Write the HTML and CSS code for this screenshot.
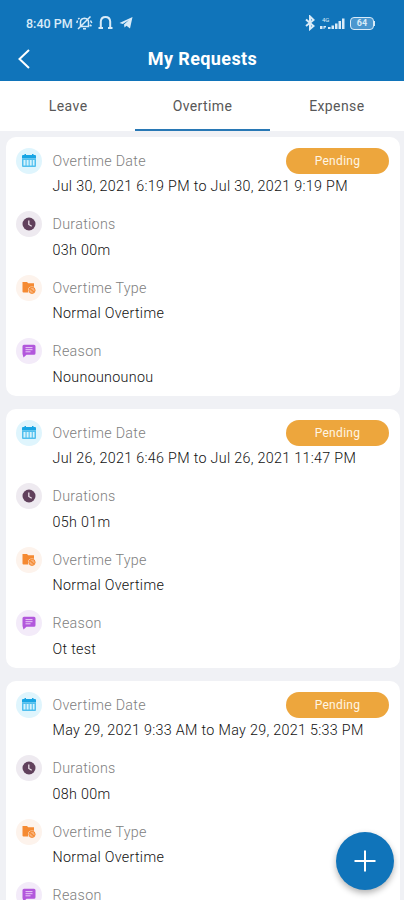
FILE: index.html
```
<!DOCTYPE html>
<html lang="en">
<head>
    <meta charset="UTF-8">
    <meta name="viewport" content="width=device-width, initial-scale=1.0">
    <title>My Requests</title>
    <link rel="stylesheet" href="styles.css">
    <script src="main.js" defer></script>
</head>
<body>
<!-- icons -->
<svg class="sprite">
    <symbol id="date" viewBox="0 0 14 14">
        <path fill="#17a5e4" d="M1 1h1.500V0h1.500v1h6V0h1.500v1H13q1 0 1 1v2.500H0V2q0-1 1-1z"/>
        <path fill="#50bfee" d="M0 4.500h14V12q0 1-1 1H1q-1 0-1-1z"/>
        <path fill="#d5f3fd" d="M1.500 6h2v5.500h-2zM4.600 6h2v5.500h-2zM7.700 6h2v5.500h-2zM10.800 6h1.700v5.500h-1.700z"/>
    </symbol>
    <symbol id="time" viewBox="0 0 14 14">
        <circle cx="7" cy="7" r="6.500" fill="#61415c"/>
        <path fill="none" stroke="#eadfe8" stroke-width="1.300" d="M6.800 3.500v4l2.900 1.700"/>
    </symbol>
    <symbol id="type" viewBox="0 0 14 14">
        <path fill="#f58a32" d="M.5 1h4.500l1.200 1.200H12v4H9L6.500 8.500v3H1.500q-1 0-1-1z"/>
        <circle cx="10" cy="9.300" r="3.900" fill="#fdeee2"/>
        <circle cx="10" cy="9.300" r="3.100" fill="#f9b27a" stroke="#f58a32"/>
        <path fill="none" stroke="#f58a32" stroke-width="1.200" d="M8 7.500l4 3.600"/>
    </symbol>
    <symbol id="reason" viewBox="0 0 14 14">
        <path fill="#b257dc" d="M2 .8h10q1.500 0 1.500 1.500v7q0 1.500-1.500 1.500H4.500L1.500 13.600 .5 10V2.300Q.5.8 2 .8z"/>
        <path stroke="#ebcdf7" d="M3.500 3.600h7M3.500 5.700h7M3.500 7.800h5"/>
    </symbol>
</svg>

<div class="header">
    <div class="status">
        <span class="clock">8:40 PM</span>
        <svg class="mute" width="17" height="16" viewBox="0 0 17 16">
            <path d="M4.500 11.500V7q0-3.500 4-3.800 4 .3 4 3.800v4.500zM7 13.800h3M2 14L14.500 1.500M1.500 5.500L.8 8M3.500 3L2.200 4.300M14.500 5.500l1.300 2.500M13.800 10l1.700 1"/>
        </svg>
        <svg class="bell" width="15" height="16" viewBox="0 0 15 16">
            <path d="M.5 13h4.500M10 13h4.500M2.800 12.500V6.500Q3.200 2 7.500 2t4.700 4.500v6"/>
        </svg>
        <svg class="plane" width="14" height="14" viewBox="0 0 14 14">
            <path d="M.5 7L13.500 1 11 12.500 7.500 9.800 5.500 11.500 5 8.500 10 4 3.800 8z"/>
        </svg>
        <svg class="bluetooth" width="10" height="16" viewBox="0 0 10 16">
            <path d="M1 4.500l7.500 6.500L5 14V1.500L8.500 5 1 11"/>
        </svg>
        <div class="signal">
            <span class="net">4G</span>
            <svg width="26" height="15" viewBox="0 0 26 15">
                <path d="M0 10h2.500v3H0zM3.500 10H6v1.500H4.500V13h-1zM8 11h2.500v2H8zM11.500 9.500H14V13h-2.500zM15 7.500h2.500V13H15zM18.500 5H21v8h-2.500zM22 2.500h2.500V13H22z"/>
            </svg>
        </div>
        <div class="battery">64</div>
    </div>
    <div class="title">
        <svg class="back" width="12" height="20" viewBox="0 0 12 20">
            <path d="M11 1L1.500 10 11 19"/>
        </svg>
        <h1>My Requests</h1>
    </div>
</div>

<ul class="tabs">
    <li>Leave</li>
    <li class="active">Overtime</li>
    <li>Expense</li>
</ul>

<div class="list"></div>

<button class="add">
    <svg width="22" height="22" viewBox="0 0 22 22"><path d="M11 .5v21M.5 11h21"/></svg>
</button>
</body>
</html>
```
FILE: styles.css
```
*{
    padding: 0;
    margin: 0;
    box-sizing: border-box;
}
body{
    height: 900px;
    overflow: hidden;
    background-color: #f0f1f5;
    font-family: Roboto, sans-serif;
}
.sprite{
    display: none;
}
.header{
    height: 81px;
    padding-top: 14px;
    background-color: #1074ba;
    color: #fff;
}
.status{
    display: flex;
    align-items: center;
    height: 18px;
    padding: 0 27px 0 26px;
    color: #d9ebf8;
}
.status svg path{
    fill: none;
    stroke: #d9ebf8;
    stroke-width: 1.5;
}
.clock{
    width: 50px;
    font-size: 12.5px;
    font-weight: 500;
    white-space: nowrap;
}
.bell{
    margin-left: 5px;
}
.status .bell path{
    stroke-width: 2;
}
.plane{
    margin-left: 6px;
}
.status .plane path,
.status .signal path{
    fill: #d9ebf8;
    stroke: none;
}
.bluetooth{
    margin-left: auto;
}
.status .bluetooth path{
    stroke-width: 2;
}
.signal{
    display: grid;
    margin-left: 5px;
}
.signal svg,
.net{
    grid-area: 1 / 1;
}
.net{
    padding-left: 2px;
    font-size: 6px;
    line-height: 8px;
}
/*电池*/
.battery{
    display: flex;
    align-items: center;
    justify-content: center;
    width: 24px;
    height: 13px;
    margin-left: 4px;
    margin-right: 3px;
    border: 1.5px solid #d9ebf8;
    border-radius: 4px;
    background-color: #4b97cf;
    font-size: 9px;
    font-weight: 700;
}
.battery::after{
    content: "";
    flex: none;
    width: 2px;
    height: 5px;
    margin-left: 6px;
    margin-right: -8px;
    background-color: #d9ebf8;
}
.title{
    display: grid;
    grid-template-columns: 30px 1fr 30px;
    align-items: center;
    height: 53px;
    padding: 0 17px 0 18px;
}
.back path{
    fill: none;
    stroke: #fff;
    stroke-width: 2;
}
.title h1{
    font-size: 18px;
    font-weight: 700;
    letter-spacing: 0.4px;
    text-align: center;
}
.tabs{
    display: flex;
    height: 50px;
    padding-left: 1px;
    list-style: none;
    background-color: #fff;
}
.tabs li{
    flex: 1;
    color: #585858;
    font-size: 14px;
    line-height: 51px;
    letter-spacing: 0.4px;
    text-align: center;
}
.tabs .active{
    border-bottom: 2px solid #2878b5;
}
.list{
    padding: 6px 4px 0 6px;
}
.card{
    height: 259px;
    margin-bottom: 13px;
    padding: 10.5px 11px 0 10px;
    border-radius: 10px;
    background-color: #fff;
}
.row{
    display: grid;
    grid-template-columns: 26px 1fr auto;
    grid-template-rows: 26px 25px;
    column-gap: 10.5px;
    align-items: center;
    margin-bottom: 12.5px;
    font-size: 14.3px;
    font-weight: 300;
    letter-spacing: 0.31px;
}
.icon{
    display: flex;
    align-items: center;
    justify-content: center;
    width: 26px;
    height: 26px;
    border-radius: 50%;
}
.icon svg{
    width: 14px;
    height: 14px;
}
.icon.date{
    background-color: #dff5fd;
}
.icon.time{
    background-color: #eeeaf0;
}
.icon.type{
    background-color: #fdf3ec;
}
.icon.reason{
    background-color: #f3ebf9;
}
.label{
    color: #808080;
}
.value{
    grid-column: 2 / 4;
    color: #111;
}
.state{
    width: 103px;
    height: 26px;
    border-radius: 13px;
    background-color: #eda63d;
    color: #fff6e5;
    font-size: 12px;
    font-weight: 400;
    line-height: 27px;
    text-align: center;
}
.add{
    position: fixed;
    right: 10px;
    bottom: 10px;
    display: flex;
    align-items: center;
    justify-content: center;
    width: 58px;
    height: 58px;
    border: none;
    border-radius: 50%;
    background-color: #1074ba;
    box-shadow: 0 3px 6px rgba(0, 0, 0, 0.3);
}
.add path{
    stroke: #fff;
    stroke-width: 2;
}
```
FILE: main.js
```
var requests = [
    ['Jul 30, 2021 6:19 PM to Jul 30, 2021 9:19 PM', '03h 00m', 'Normal Overtime', 'Nounounounou'],
    ['Jul 26, 2021 6:46 PM to Jul 26, 2021 11:47 PM', '05h 01m', 'Normal Overtime', 'Ot test'],
    ['May 29, 2021 9:33 AM to May 29, 2021 5:33 PM', '08h 00m', 'Normal Overtime', '']
];
var icons = ['date', 'time', 'type', 'reason'];
var labels = ['Overtime Date', 'Durations', 'Overtime Type', 'Reason'];
var html = '';
for (var i = 0; i < requests.length; i++) {
    html += '<div class="card">';
    for (var j = 0; j < labels.length; j++) {
        html += '<div class="row"><span class="icon ' + icons[j] + '"><svg><use href="#' + icons[j] + '"/></svg></span>' +
            '<span class="label">' + labels[j] + '</span>' +
            (j === 0 ? '<span class="state">Pending</span>' : '') +
            '<span class="value">' + requests[i][j] + '</span></div>';
    }
    html += '</div>';
}
document.getElementsByClassName('list')[0].innerHTML = html;
```
